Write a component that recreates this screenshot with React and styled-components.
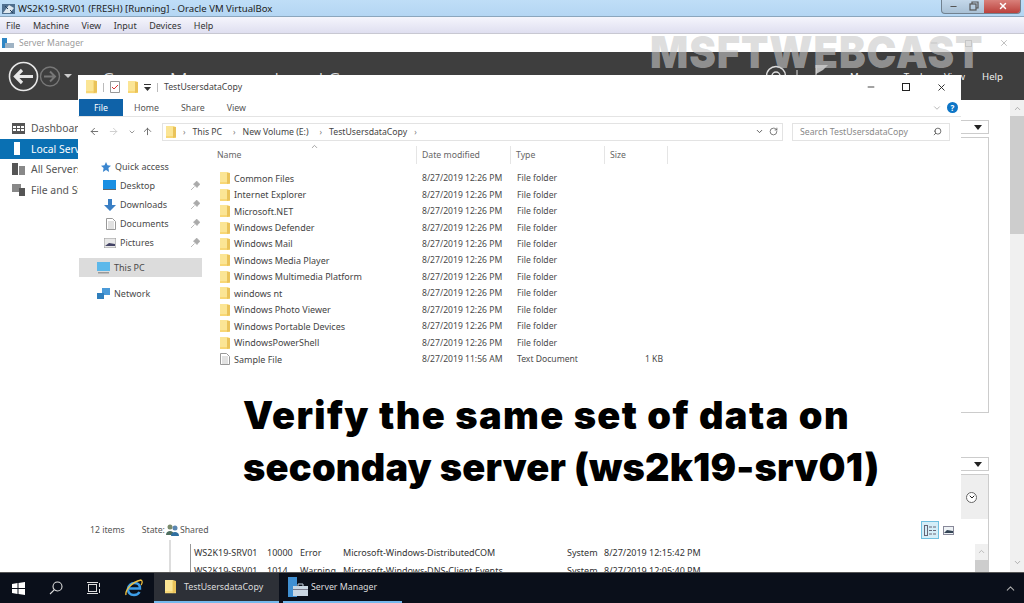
import React from "react";
import styled, { createGlobalStyle } from "styled-components";
import { ChevronDown, ChevronUp, ArrowLeft, ArrowRight, ArrowUp, RotateCw, Search, Minus, X } from "lucide-react";

const GlobalStyle = createGlobalStyle`
  *, *::before, *::after { box-sizing: border-box; }
  html, body { margin: 0; padding: 0; background: #fff; }
  body { font-family: "Noto Sans", "Open Sans", sans-serif; color: #444; overflow: hidden; }
  svg { flex: none; }
`;

const Screen = styled.div`
  position: relative;
  width: 1024px;
  height: 603px;
  display: flex;
  flex-direction: column;
  overflow: hidden;
`;

const VBoxTitle = styled.div`
  height: 17px;
  flex: none;
  display: flex;
  align-items: center;
  background: linear-gradient(#bfdef7, #b4d6f3);
  border-bottom: 1px solid #8ba6bd;
  padding-left: 2px;
  gap: 3px;
  font-size: 9.6px;
  color: #222;
`;

const WinButtons = styled.div`
  margin-left: auto;
  margin-right: 3px;
  width: 80px;
  height: 14px;
  margin-bottom: 3px;
  display: grid;
  grid-template-columns: 22px 20px 38px;
  border: 1px solid #71818f;
  border-top: none;
  border-radius: 0 0 4px 4px;
  overflow: hidden;
  background: linear-gradient(#c4d8ea, #a9c1d6);
`;

const WinButton = styled.div`
  display: flex;
  align-items: center;
  justify-content: center;
  color: ${(p) => (p.$close ? "#fff" : "#555")};
  background: ${(p) => (p.$close ? "linear-gradient(#d9807a, #bb413c)" : "transparent")};
`;

const VBoxMenu = styled.div`
  height: 17px;
  flex: none;
  display: flex;
  align-items: center;
  gap: 12.5px;
  padding-left: 6px;
  font-size: 9px;
  color: #333;
  background: linear-gradient(#f5f5fc, #dfdff0);
  border-bottom: 1px solid #c8c8d2;
`;

const SmTitle = styled.div`
  height: 18px;
  flex: none;
  display: flex;
  align-items: center;
  gap: 5px;
  padding-left: 2px;
  font-size: 8.6px;
  color: #9a9a9a;
  background: #fff;
`;

const SmControls = styled.div`
  margin-left: auto;
  margin-right: 3px;
  display: grid;
  grid-template-columns: repeat(3, 35px);
  justify-items: center;
  align-items: center;
  color: #b5b5b5;
`;

const SmRestore = styled.span`
  width: 7px;
  height: 7px;
  border: 1px solid #c4c4c4;
`;

const SmHeader = styled.div`
  height: 48px;
  flex: none;
  background: #3e3e3e;
  color: #e6e6e6;
  display: flex;
  padding: 9px 0 0 8px;
  align-items: flex-start;
`;

const SmHeadTitle = styled.div`
  margin: 6px 0 0 30px;
  font-size: 21px;
  line-height: 28px;
  font-weight: 300;
  color: #ddd;
  white-space: nowrap;
`;

const HeaderNav = styled.div`
  margin-left: auto;
  margin-right: 21px;
  display: flex;
  gap: 17px;
  font-size: 9.6px;
  line-height: 14px;
  color: #eee;
`;

const NavGlyphs = styled.svg`
  margin: 3px 5px 0 0;
`;

const NavLabel = styled.span`
  margin-top: 9px;
`;

const SmBody = styled.div`
  flex: 1;
  display: flex;
  min-height: 0;
  overflow: hidden;
  background: #fff;
`;

const SmNav = styled.div`
  width: 78px;
  flex: none;
  padding-top: 18px;
  display: flex;
  flex-direction: column;
`;

const SmNavItem = styled.div`
  height: 20.5px;
  display: flex;
  align-items: center;
  gap: 6px;
  padding-left: 12px;
  font-size: 10.4px;
  white-space: nowrap;
  overflow: hidden;
  color: ${(p) => (p.$active ? "#fff" : "#555")};
  background: ${(p) => (p.$active ? "#0a70b3" : "transparent")};
`;

const SmContent = styled.div`
  flex: 1;
  display: flex;
  flex-direction: column;
  padding: 444px 0 0 112px;
  font-size: 9px;
  color: #333;
  background: linear-gradient(#ddd, #ddd) no-repeat 91px 0 / 2px 100%;
`;

const LogRow = styled.div`
  height: 17.5px;
  flex: none;
  display: grid;
  grid-template-columns: 73px 33px 43px 224px 37px 1fr;
  align-items: center;
  white-space: nowrap;
  border-left: 1px solid #999;
  padding-left: 3px;
  overflow: hidden;
`;

const RightRail = styled.div`
  width: 63px;
  flex: none;
  display: flex;
  justify-content: space-between;
`;

const RailPanel = styled.div`
  width: 28px;
  display: flex;
  flex-direction: column;
  padding-top: 20px;
`;

const DropBox = styled.div`
  height: 14px;
  flex: none;
  border: 1px solid #ccc;
  border-left: none;
  display: flex;
  align-items: center;
  justify-content: flex-end;
  padding-right: 6px;
`;

const OutlineBox = styled.div`
  height: 276px;
  margin: 3px 0 44px;
  flex: none;
  border: 1px solid #ccc;
  border-left: none;
`;

const GreyPanel = styled.div`
  height: 45px;
  margin-top: 3px;
  flex: none;
  background: #eee;
  border-right: 1px solid #ccc;
  border-top: 1px solid #ccc;
  display: flex;
  align-items: center;
  justify-content: center;
  padding-right: 6px;
`;

const RoundChevron = styled.div`
  width: 11px;
  height: 11px;
  border: 1px solid #666;
  border-radius: 50%;
  background: #fff;
  color: #222;
  display: flex;
  align-items: center;
  justify-content: center;
`;

const LowerArea = styled.div`
  flex: 1;
  border-right: 1px solid #ccc;
  display: flex;
  justify-content: flex-end;
  padding-top: 25px;
`;

const LowerScroll = styled.div`
  width: 13px;
  background: #f0f0f0;
  color: #aaa;
  display: flex;
  flex-direction: column;
  align-items: center;
  padding-top: 3px;
  gap: 4px;
`;

const LowerThumb = styled.div`
  flex: 1;
  width: 100%;
  background: #cdcdcd;
`;

const ScrollBar = styled.div`
  width: 14px;
  background: #f0f0f0;
  color: #999;
  display: flex;
  flex-direction: column;
  align-items: center;
  padding-top: 4px;
`;

const ScrollThumb = styled.div`
  width: 100%;
  height: 118px;
  margin: 3px 0 324px;
  flex: none;
  background: #cdcdcd;
`;

const Taskbar = styled.div`
  height: 31px;
  flex: none;
  display: flex;
  align-items: stretch;
  background: #0a0f1a;
  border-top: 1px solid #555;
  color: #ddd;
  font-size: 8.8px;
  position: relative;
`;

const TaskIcon = styled.div`
  width: ${(p) => p.$w}px;
  display: flex;
  align-items: center;
  justify-content: center;
  flex: none;
`;

const TaskApp = styled.div`
  width: ${(p) => p.$w}px;
  margin-right: 4px;
  display: flex;
  align-items: center;
  gap: ${(p) => p.$gap}px;
  padding-left: ${(p) => p.$pad}px;
  flex: none;
  background: ${(p) => (p.$active ? "#2d3037" : "transparent")};
  border-bottom: 2px solid #76b9ed;
`;

const Tray = styled.div`
  margin-left: auto;
  margin-right: 7px;
  display: flex;
  align-items: center;
  color: #aaa;
`;

/* explorer window sits on top of server manager */
const Explorer = styled.div`
  position: absolute;
  left: 78px;
  top: 75px;
  width: 883px;
  height: 465px;
  background: #fff;
  display: flex;
  flex-direction: column;
  font-size: 8.7px;
  color: #4a4a4a;
`;

const TitleRow = styled.div`
  height: 24px;
  flex: none;
  display: flex;
  align-items: center;
  padding-left: 8px;
  color: #444;
`;

const QuickSep = styled.span`
  width: 1px;
  height: 9px;
  background: #bbb;
  margin: 0 6px;
`;

const QuickIcon = styled.span`
  display: flex;
  margin-right: ${(p) => p.$mr}px;
`;

const WindowControls = styled.div`
  margin-left: auto;
  display: grid;
  grid-template-columns: 35px 35px 36px;
  margin-right: 2px;
  color: #222;
  justify-items: center;
  align-items: center;
`;

const MaxBox = styled.span`
  width: 8px;
  height: 8px;
  border: 1px solid #222;
`;

const TabRow = styled.div`
  height: 18px;
  flex: none;
  display: flex;
  align-items: stretch;
  padding-left: 1px;
  border-bottom: 1px solid #e4e4e4;
  font-size: 8.8px;
`;

const FileTab = styled.div`
  width: 44px;
  display: flex;
  align-items: center;
  justify-content: center;
  background: #0f62a8;
  color: #fff;
`;

const Tab = styled.div`
  padding: 0 11px;
  display: flex;
  align-items: center;
  color: #555;
`;

const TabRight = styled.div`
  margin-left: auto;
  display: flex;
  align-items: center;
  gap: 5px;
  padding-right: 3px;
  color: #aaa;
`;

const HelpDot = styled.div`
  width: 11px;
  height: 11px;
  border-radius: 50%;
  background: #0d75c6;
  color: #fff;
  font-size: 8px;
  font-weight: 700;
  display: flex;
  align-items: center;
  justify-content: center;
`;

const AddressRow = styled.div`
  height: 19px;
  margin-top: 5px;
  flex: none;
  display: flex;
  align-items: center;
  padding-left: 9px;
  color: #888;
`;

const NavButtons = styled.div`
  width: 75px;
  display: grid;
  grid-template-columns: 14px 24px 13px 19px;
  align-items: center;
  justify-items: center;
  flex: none;
  color: #666;
`;

const AddressBox = styled.div`
  width: 621px;
  height: 18px;
  border: 1px solid #e3e3e3;
  display: flex;
  align-items: center;
  padding-left: 3px;
  gap: 7px;
  color: #444;
  flex: none;
`;

const Crumb = styled.span`
  color: #777;
  font-size: 8px;
  margin-left: ${(p) => p.$ml || 0}px;
`;

const AddressEnd = styled.div`
  margin-left: auto;
  display: flex;
  align-items: center;
  gap: 5px;
  color: #555;
  padding-right: 4px;
`;

const SearchBox = styled.div`
  margin-left: 9px;
  width: 158px;
  height: 18px;
  border: 1px solid #e3e3e3;
  display: flex;
  align-items: center;
  justify-content: space-between;
  padding: 0 7px;
  color: #888;
`;

const SearchGlyph = styled(Search)`
  color: #444;
  transform: scaleX(-1);
`;

const Main = styled.div`
  flex: 1;
  min-height: 0;
  display: flex;
  padding-top: 5px;
`;

const Sidebar = styled.div`
  width: 123px;
  margin-left: 1px;
  flex: none;
  padding-top: 11px;
  display: flex;
  flex-direction: column;
  font-size: 9px;
`;

const SideItem = styled.div`
  height: ${(p) => p.$h || 19}px;
  margin-bottom: ${(p) => p.$mb || 0}px;
  display: flex;
  align-items: center;
  gap: 4px;
  padding-left: ${(p) => p.$indent}px;
  background: ${(p) => (p.$active ? "#dcdcdc" : "transparent")};
  position: relative;
`;

const Pin = styled.svg`
  position: absolute;
  left: 112px;
  top: 5px;
`;

const FileArea = styled.div`
  margin-left: 15px;
  flex: 1;
  display: flex;
  flex-direction: column;
`;

const SortMark = styled.div`
  position: absolute;
  left: 232px;
  top: 67px;
  color: #888;
  display: flex;
`;

const ListHeader = styled.div`
  display: grid;
  grid-template-columns: 200px 94px 94px 63px;
  height: 18px;
  margin-bottom: 6px;
  width: 451px;
  color: #666;
`;

const HeadCell = styled.div`
  padding-left: ${(p) => p.$pad ?? 5}px;
  border-right: 1px solid #e5e5e5;
  display: flex;
  align-items: center;
`;

const FileRow = styled.div`
  display: grid;
  grid-template-columns: 205px 95px 94px 52px;
  height: 16.45px;
  align-items: center;
  width: 446px;
  white-space: nowrap;
  font-size: 8.6px;
`;

const NameCell = styled.div`
  display: flex;
  align-items: center;
  gap: 4px;
  padding-left: 3px;
  color: #444;
  font-size: 9px;
`;

const SizeCell = styled.div`
  text-align: right;
`;

const Caption = styled.div`
  position: absolute;
  left: 165px;
  top: 314px;
  font-family: Inter, "Liberation Sans", sans-serif;
  font-weight: 900;
  font-size: 38px;
  line-height: 52px;
  color: #000;
  white-space: nowrap;
`;

const CaptionLine = styled.div`
  letter-spacing: ${(p) => p.$spacing}px;
`;

const StatusBar = styled.div`
  height: 18px;
  flex: none;
  margin-bottom: 1px;
  display: flex;
  align-items: center;
  padding-left: 12px;
  color: #555;
`;

const StateLabel = styled.span`
  margin-left: 17px;
  display: flex;
  align-items: center;
  gap: 1px;
`;

const ViewButtons = styled.div`
  margin-left: auto;
  margin-right: 7px;
  display: flex;
  align-items: center;
  gap: 4px;
`;

const ViewDetails = styled.div`
  width: 18px;
  height: 18px;
  border: 1px solid #6fc0e0;
  background: #d4eef8;
  display: flex;
  align-items: center;
  justify-content: center;
`;

const Watermark = styled.div`
  position: absolute;
  left: 650px;
  top: 27px;
  font-family: Inter, "Liberation Sans", sans-serif;
  font-weight: 900;
  font-size: 40px;
  letter-spacing: 0.9px;
  line-height: 46px;
  color: rgba(200, 200, 200, 0.62);
  white-space: nowrap;
  transform: scaleY(1.1);
  transform-origin: top left;
`;

const FolderIcon = ({ size = 11 }) => (
  <svg width={size} height={size * 1.2} viewBox="0 0 10 12">
    <path d="M0 0h7l3 1v11H0z" fill="#f8d775" />
    <path d="M0 0h7v10H0z" fill="#fbe595" />
    <path d="M7 1l3 0v10l-3 1z" fill="#eac35a" />
  </svg>
);

const DocIcon = () => (
  <svg width="10" height="12" viewBox="0 0 10 12">
    <path d="M.5.5h6l3 3v8h-9z" fill="#fff" stroke="#999" />
    <path d="M2 4h6M2 6h6M2 8h6M2 10h6" stroke="#aaa" strokeWidth=".7" />
  </svg>
);

const PinIcon = () => (
  <Pin width="9" height="9" viewBox="0 0 9 9">
    <path d="M5.500 0L9 3.500 7.800 4 6 6.500 2.500 3 5 1.200zM3.500 5.500L0 9" fill="#aaa" stroke="#aaa" strokeWidth=".8" />
  </Pin>
);

const DropArrow = () => (
  <svg width="8" height="5" viewBox="0 0 8 5"><path d="M0 0h8L4 5z" fill="#222" /></svg>
);

const folders = [
  "Common Files",
  "Internet Explorer",
  "Microsoft.NET",
  "Windows Defender",
  "Windows Mail",
  "Windows Media Player",
  "Windows Multimedia Platform",
  "windows nt",
  "Windows Photo Viewer",
  "Windows Portable Devices",
  "WindowsPowerShell",
];

export default function App() {
  return (
    <Screen>
      <GlobalStyle />
      <VBoxTitle>
        <svg width="13" height="13" viewBox="0 0 13 13">
          <rect x="0" y="2" width="13" height="10" fill="#4f6f8f" />
          <path d="M1 11L7 3l5 3-4 5z" fill="#dfe8ef" />
          <path d="M3 4l3 3M8 8l3 3" stroke="#27435f" />
        </svg>
        WS2K19-SRV01 (FRESH) [Running] - Oracle VM VirtualBox
        <WinButtons>
          <WinButton><Minus size={9} strokeWidth={3} /></WinButton>
          <WinButton>
            <svg width="10" height="10" viewBox="0 0 10 10" fill="none" stroke="#555" strokeWidth="1.2">
              <rect x="1" y="3" width="6" height="6" />
              <path d="M3 3V1h6v6H7" />
            </svg>
          </WinButton>
          <WinButton $close><X size={10} strokeWidth={3.5} /></WinButton>
        </WinButtons>
      </VBoxTitle>
      <VBoxMenu>
        <span>File</span><span>Machine</span><span>View</span><span>Input</span><span>Devices</span><span>Help</span>
      </VBoxMenu>
      <SmTitle>
        <svg width="12" height="11" viewBox="0 0 12 11">
          <rect x="0" y="0" width="5" height="10" fill="#2f86c4" />
          <rect x="3" y="5" width="9" height="5" fill="#9fb3c4" />
        </svg>
        Server Manager
        <SmControls>
          <Minus size={10} />
          <SmRestore />
          <X size={10} />
        </SmControls>
      </SmTitle>
      <SmHeader>
        <svg width="31" height="31" viewBox="0 0 31 31" fill="none" stroke="#e8e8e8">
          <circle cx="15.500" cy="15.500" r="14" strokeWidth="1.600" />
          <path d="M25 15.500H8M14 9l-6.500 6.500L14 22" strokeWidth="3.200" />
        </svg>
        <svg width="25" height="31" viewBox="0 0 25 31" fill="none" stroke="#777">
          <circle cx="11" cy="15.500" r="9.500" strokeWidth="1.400" />
          <path d="M5 15.500h11M11 10.500l5 5-5 5" strokeWidth="2" />
        </svg>
        <svg width="9" height="31" viewBox="0 0 9 31">
          <path d="M0 13h8l-4 4z" fill="#ccc" />
        </svg>
        <SmHeadTitle>Server Manager • Local Server</SmHeadTitle>
        <HeaderNav>
          <NavGlyphs width="62" height="22" viewBox="0 0 62 22" fill="none" stroke="#ddd">
            <circle cx="10" cy="12" r="9.500" strokeWidth="1.500" />
            <circle cx="10" cy="12" r="4" strokeWidth="1.500" />
            <path d="M31 6v16" strokeWidth="1" />
            <path d="M50 1h12l-5 5-7 4z" fill="#bbb" stroke="none" />
            <path d="M50 1v21" strokeWidth="1" />
          </NavGlyphs>
          <NavLabel>Manage</NavLabel>
          <NavLabel>Tools</NavLabel>
          <NavLabel>View</NavLabel>
          <NavLabel>Help</NavLabel>
        </HeaderNav>
      </SmHeader>
      <SmBody>
        <SmNav>
          <SmNavItem>
            <svg width="13" height="11" viewBox="0 0 13 11" fill="#555">
              <path d="M0 0h13v11H0zM1 3v2h3V3zm4 0v2h3V3zm4 0v2h3V3zM1 6v2h3V6zm4 0v2h3V6zm4 0v2h3V6z" fillRule="evenodd" />
            </svg>
            Dashboard
          </SmNavItem>
          <SmNavItem $active>
            <svg width="13" height="13" viewBox="0 0 13 13"><rect x="2" y="0" width="6" height="13" fill="#fff" /></svg>
            Local Server
          </SmNavItem>
          <SmNavItem>
            <svg width="13" height="12" viewBox="0 0 13 12" fill="#555"><rect width="6" height="12" /><rect x="7" y="3" width="6" height="9" fill="#888" /></svg>
            All Servers
          </SmNavItem>
          <SmNavItem>
            <svg width="13" height="12" viewBox="0 0 13 12" fill="#888"><rect width="9" height="8" /><rect x="7" y="4" width="6" height="8" fill="#555" /></svg>
            File and Storage
          </SmNavItem>
        </SmNav>
        <SmContent>
          <LogRow>
            <span>WS2K19-SRV01</span><span>10000</span><span>Error</span>
            <span>Microsoft-Windows-DistributedCOM</span><span>System</span><span>8/27/2019 12:15:42 PM</span>
          </LogRow>
          <LogRow>
            <span>WS2K19-SRV01</span><span>1014</span><span>Warning</span>
            <span>Microsoft-Windows-DNS-Client Events</span><span>System</span><span>8/27/2019 12:05:40 PM</span>
          </LogRow>
        </SmContent>
        <RightRail>
          <RailPanel>
            <DropBox><DropArrow /></DropBox>
            <OutlineBox />
            <DropBox><DropArrow /></DropBox>
            <GreyPanel><RoundChevron><ChevronDown size={8} strokeWidth={3} /></RoundChevron></GreyPanel>
            <LowerArea>
              <LowerScroll>
                <ChevronUp size={9} />
                <LowerThumb />
              </LowerScroll>
            </LowerArea>
          </RailPanel>
          <ScrollBar>
            <ChevronUp size={9} />
            <ScrollThumb />
            <ChevronDown size={9} />
          </ScrollBar>
        </RightRail>
      </SmBody>
      <Taskbar>
        <TaskIcon $w={37}>
          <svg width="13" height="13" viewBox="0 0 13 13" fill="#fff">
            <path d="M0 2l5.500-1v5H0zM6.500 1L13 0v6H6.500zM0 7h5.500v5L0 11zM6.500 7H13v6l-6.500-1z" />
          </svg>
        </TaskIcon>
        <TaskIcon $w={38}>
          <svg width="14" height="14" viewBox="0 0 14 14" fill="none" stroke="#ddd" strokeWidth="1.100">
            <circle cx="8.500" cy="5.500" r="4.500" />
            <path d="M5.200 8.800L1 13" />
          </svg>
        </TaskIcon>
        <TaskIcon $w={38}>
          <svg width="14" height="12" viewBox="0 0 14 12" fill="none" stroke="#ddd">
            <rect x="1.500" y="2.500" width="8" height="7" />
            <path d="M0 .5h11M0 11.500h11M12.500 1v4M12.500 7v4" />
          </svg>
        </TaskIcon>
        <TaskIcon $w={41}>
          <svg width="18" height="18" viewBox="0 0 18 18" fill="none">
            <path d="M3 9.500h12c0-3.500-2.300-5.500-5.500-5.500C6 4 3.500 6.500 3 9.500zM3 10c0 4 2.500 6 6 6 2.500 0 4.500-1 5.500-3" stroke="#3d9ee8" strokeWidth="2.400" />
            <path d="M1 16C0 12 6 3 16 1c2 1 1 4 0 5" stroke="#f2c13d" strokeWidth="1.300" />
          </svg>
        </TaskIcon>
        <TaskApp $w={125} $pad={11} $gap={8} $active>
          <FolderIcon size={11} />
          TestUsersdataCopy
        </TaskApp>
        <TaskApp $w={119} $pad={5} $gap={3}>
          <svg width="20" height="20" viewBox="0 0 20 20">
            <rect x="0" y="0" width="9" height="20" fill="#3f8fd2" />
            <rect x="5" y="9" width="15" height="10" fill="#c9d6e2" />
            <path d="M5 12.500h15" stroke="#778" />
            <path d="M10 9V7h5v2" fill="none" stroke="#c9d6e2" />
          </svg>
          Server Manager
        </TaskApp>
        <Tray><ChevronUp size={13} /></Tray>
      </Taskbar>

      <Explorer>
        <TitleRow>
          <FolderIcon size={11} />
          <QuickSep />
          <QuickIcon $mr={8}>
            <svg width="10" height="12" viewBox="0 0 10 12">
              <path d="M.5.5h9v11h-9z" fill="#fff" stroke="#999" />
              <path d="M2 6l2 2 4-4" fill="none" stroke="#d33" />
            </svg>
          </QuickIcon>
          <QuickIcon $mr={6}><FolderIcon size={10} /></QuickIcon>
          <svg width="7" height="7" viewBox="0 0 7 7"><path d="M0 0h7v1H0zM0 3h7L3.500 7z" fill="#333" /></svg>
          <QuickSep />
          TestUsersdataCopy
          <WindowControls>
            <Minus size={10} />
            <MaxBox />
            <X size={11} />
          </WindowControls>
        </TitleRow>
        <TabRow>
          <FileTab>File</FileTab>
          <Tab>Home</Tab>
          <Tab>Share</Tab>
          <Tab>View</Tab>
          <TabRight>
            <ChevronDown size={10} />
            <HelpDot>?</HelpDot>
          </TabRight>
        </TabRow>
        <AddressRow>
          <NavButtons>
            <ArrowLeft size={11} />
            <ArrowRight size={11} color="#ccc" />
            <ChevronDown size={8} />
            <ArrowUp size={11} />
          </NavButtons>
          <AddressBox>
            <FolderIcon size={10} />
            <Crumb>›</Crumb>This PC
            <Crumb $ml={4}>›</Crumb>New Volume (E:)
            <Crumb $ml={4}>›</Crumb>TestUsersdataCopy
            <Crumb>›</Crumb>
            <AddressEnd>
              <ChevronDown size={9} strokeWidth={2.500} />
              <RotateCw size={9} />
            </AddressEnd>
          </AddressBox>
          <SearchBox>
            Search TestUsersdataCopy
            <SearchGlyph size={9} />
          </SearchBox>
        </AddressRow>
        <Main>
          <Sidebar>
            <SideItem $indent={22}>
              <svg width="10" height="10" viewBox="0 0 10 10"><path d="M5 0l1.500 3.300L10 3.700 7.400 6l.7 4L5 8 1.900 10l.7-4L0 3.700l3.500-.4z" fill="#3a86cf" /></svg>
              Quick access
            </SideItem>
            <SideItem $indent={24}>
              <svg width="13" height="11" viewBox="0 0 13 11"><rect width="13" height="9" fill="#1a8fe3" /><rect y="9" width="13" height="1" fill="#666" /></svg>
              Desktop<PinIcon />
            </SideItem>
            <SideItem $indent={25}>
              <svg width="12" height="12" viewBox="0 0 12 12"><path d="M4 0h4v6h4l-6 6-6-6h4z" fill="#3a7fc4" /></svg>
              Downloads<PinIcon />
            </SideItem>
            <SideItem $indent={27}>
              <DocIcon />
              Documents<PinIcon />
            </SideItem>
            <SideItem $indent={25} $mb={6}>
              <svg width="12" height="10" viewBox="0 0 12 10"><rect width="12" height="10" fill="#e8e8e8" stroke="#999" /><path d="M1 8l4-3 6 1v2z" fill="#446" /></svg>
              Pictures<PinIcon />
            </SideItem>
            <SideItem $indent={18} $active $mb={7}>
              <svg width="13" height="12" viewBox="0 0 13 12"><rect width="13" height="9" fill="#5cb8ea" /><rect x="1" y="10" width="11" height="1.500" fill="#999" /></svg>
              This PC
            </SideItem>
            <SideItem $indent={18}>
              <svg width="13" height="12" viewBox="0 0 13 12"><rect x="5" y="0" width="8" height="7" fill="#4b9ad8" /><rect x="0" y="5" width="7" height="6" fill="#2f7ebc" /></svg>
              Network
            </SideItem>
          </Sidebar>
          <SortMark><ChevronUp size={9} /></SortMark>
          <FileArea>
            <ListHeader>
              <HeadCell $pad={0}>Name</HeadCell>
              <HeadCell>Date modified</HeadCell>
              <HeadCell>Type</HeadCell>
              <HeadCell>Size</HeadCell>
            </ListHeader>
            {folders.map((name) => (
              <FileRow key={name}>
                <NameCell><FolderIcon size={10} />{name}</NameCell>
                <span>8/27/2019 12:26 PM</span>
                <span>File folder</span>
                <span />
              </FileRow>
            ))}
            <FileRow>
              <NameCell><DocIcon />Sample File</NameCell>
              <span>8/27/2019 11:56 AM</span>
              <span>Text Document</span>
              <SizeCell>1 KB</SizeCell>
            </FileRow>
          </FileArea>
        </Main>
        <Caption>
          <CaptionLine $spacing={1.4}>Verify the same set of data on</CaptionLine>
          <CaptionLine $spacing={0.2}>seconday server (ws2k19-srv01)</CaptionLine>
        </Caption>
        <StatusBar>
          12 items
          <StateLabel>
            State:
            <svg width="13" height="12" viewBox="0 0 13 12">
              <circle cx="4" cy="3" r="2.500" fill="#7a8a6a" />
              <path d="M0 11c0-3 2-4 4-4s4 1 4 4z" fill="#4f6f5f" />
              <circle cx="9" cy="4" r="2.500" fill="#5a86b0" />
              <path d="M5 12c0-3 2-4 4-4s4 1 4 4z" fill="#2f6fa0" />
            </svg>
            Shared
          </StateLabel>
          <ViewButtons>
            <ViewDetails>
              <svg width="13" height="11" viewBox="0 0 13 11" fill="none" stroke="#667">
                <rect x=".5" y=".5" width="3" height="10" />
                <path d="M5 2h3M9 2h3M5 5.500h3M9 5.500h3M5 9h3M9 9h3" />
              </svg>
            </ViewDetails>
            <svg width="11" height="9" viewBox="0 0 11 9">
              <rect x=".5" y=".5" width="10" height="8" fill="#eef2f5" stroke="#889" />
              <path d="M1 7l3-3 6 1v2z" fill="#345" />
            </svg>
          </ViewButtons>
        </StatusBar>
      </Explorer>
      <Watermark>MSFTWEBCAST</Watermark>
    </Screen>
  );
}
